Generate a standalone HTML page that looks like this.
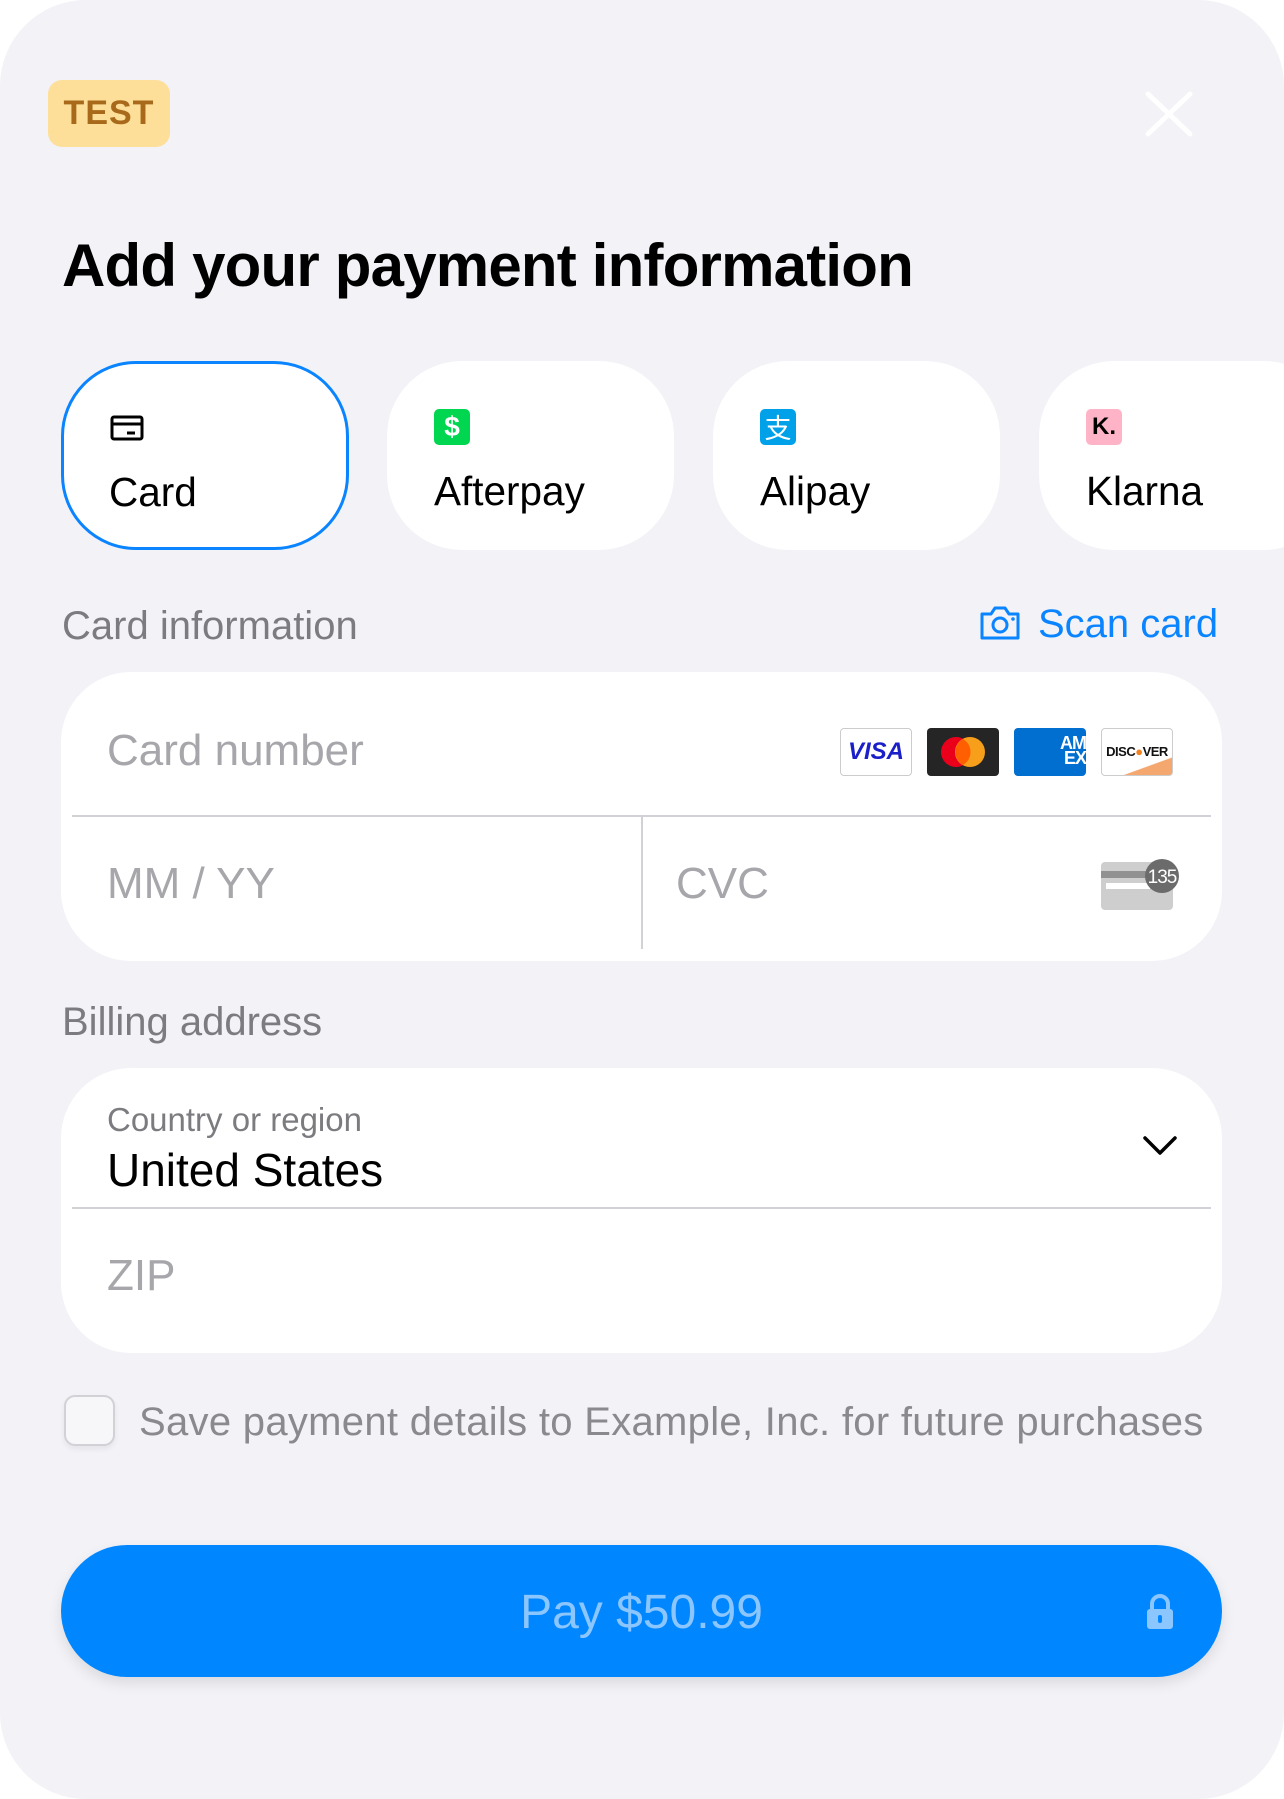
<!DOCTYPE html>
<html><head><meta charset="utf-8"><style>
*{margin:0;padding:0;box-sizing:border-box}
html,body{width:1284px;height:1799px;background:#fff;overflow:hidden;font-family:"Liberation Sans",sans-serif}
.sheet{position:absolute;left:0;top:0;width:1284px;height:1799px;background:#f2f2f7;border-radius:86px}
.a{position:absolute}
.tab{position:absolute;top:361px;height:189px;width:287px;background:#fff;border-radius:75px}
.tab .lbl{position:absolute;left:47px;top:110px;font-size:40.5px;color:#000;line-height:1}
.tab .ic{position:absolute;left:47px;top:48px;width:36px;height:36px;border-radius:5px}
.ph{position:absolute;font-size:44px;color:#a6a6ab;line-height:1}
.sec{position:absolute;font-size:40px;color:#7c7c80;line-height:1;left:62px}
</style></head><body>
<div class="sheet">
  <div class="a" style="left:48px;top:80px;width:122px;height:67px;background:#fddf99;border-radius:14px;color:#a86a1a;font-weight:bold;font-size:34px;line-height:67px;text-align:center;letter-spacing:1px">TEST</div>
  <svg class="a" style="left:1144px;top:90px" width="50" height="48"><path d="M4 4L46 44M46 4L4 44" stroke="#fff" stroke-width="5" stroke-linecap="round"/></svg>
  <div class="a" style="left:62px;top:236px;font-size:60px;font-weight:bold;color:#000;line-height:1;letter-spacing:-0.8px">Add your payment information</div>

  <div class="tab" style="left:61px;border:3px solid #0a84ff;width:288px"><svg class="ic" style="left:45px;top:46px" viewBox="0 0 36 36"><rect x="3" y="7" width="30" height="22" rx="2" fill="none" stroke="#000" stroke-width="3"/><line x1="3" y1="14" x2="33" y2="14" stroke="#000" stroke-width="3"/><line x1="18" y1="23" x2="26" y2="23" stroke="#000" stroke-width="3"/></svg><div class="lbl" style="left:45px;top:108px">Card</div></div>
  <div class="tab" style="left:387px"><div class="ic" style="background:#00d64f;color:#fff;font-weight:bold;font-size:28px;text-align:center;line-height:36px">$</div><div class="lbl">Afterpay</div></div>
  <div class="tab" style="left:713px"><div class="ic" style="background:#00a1e9;color:#fff;font-size:27px;text-align:center;line-height:36px;font-family:'Noto Sans CJK SC',sans-serif">支</div><div class="lbl">Alipay</div></div>
  <div class="tab" style="left:1039px;width:300px"><div class="ic" style="background:#ffb3c7;color:#000;font-weight:bold;font-size:24px;text-align:center;line-height:36px">K.</div><div class="lbl">Klarna</div></div>

  <div class="sec" style="top:606px">Card information</div>
  <svg class="a" style="left:978px;top:604px" width="44" height="38" viewBox="0 0 44 38"><path d="M4 10h9l4-6h10l4 6h9v24H4z" fill="none" stroke="#0a84ff" stroke-width="3" stroke-linejoin="round"/><circle cx="22" cy="21" r="7" fill="none" stroke="#0a84ff" stroke-width="3"/><circle cx="35" cy="15" r="1.8" fill="#0a84ff"/></svg>
  <div class="a" style="left:1038px;top:604px;font-size:40px;color:#0a84ff;line-height:1">Scan card</div>

  <div class="a" style="left:61px;top:672px;width:1161px;height:289px;background:#fff;border-radius:70px"></div>
  <div class="a" style="left:72px;top:815px;width:1139px;height:2px;background:#d1d1d6"></div>
  <div class="a" style="left:641px;top:816px;width:2px;height:133px;background:#d1d1d6"></div>
  <div class="ph" style="left:107px;top:729px">Card number</div>
  <div class="ph" style="left:107px;top:862px">MM / YY</div>
  <div class="ph" style="left:676px;top:862px">CVC</div>
  <div class="a" style="left:840px;top:728px;width:72px;height:48px;border:1px solid #ccc;border-radius:4px;background:#fff;color:#1a1fc8;font-weight:bold;font-style:italic;font-size:24px;text-align:center;line-height:46px">VISA</div>
  <svg class="a" style="left:927px;top:728px" width="72" height="48"><rect width="72" height="48" rx="4" fill="#252525"/><circle cx="29" cy="24" r="15" fill="#eb001b"/><circle cx="43" cy="24" r="15" fill="#f79e1b"/><path d="M36 11a15 15 0 0 1 0 26a15 15 0 0 1 0-26z" fill="#ff5f00"/></svg>
  <div class="a" style="left:1014px;top:728px;width:72px;height:48px;border-radius:4px;background:#016fd0;color:#fff;font-weight:bold;font-size:18px;line-height:15px;text-align:right;padding:8px 0 0 0;letter-spacing:-1px">AM<br>EX</div>
  <div class="a" style="left:1101px;top:728px;width:72px;height:48px;border:1px solid #ccc;border-radius:4px;background:linear-gradient(160deg,#fff 75%,#f4a870 76%);color:#111;font-weight:bold;font-size:13px;line-height:46px;text-align:center;letter-spacing:-0.5px">DISC<span style="color:#f48120">●</span>VER</div>
  <svg class="a" style="left:1100px;top:858px" width="82" height="54"><rect x="1" y="4" width="72" height="48" rx="4" fill="#cecece"/><rect x="1" y="13" width="72" height="7" fill="#919191"/><rect x="6" y="25" width="44" height="6" fill="#fff"/><circle cx="62" cy="18" r="17" fill="#6b6b6b"/><text x="62" y="25" fill="#fff" font-size="19" text-anchor="middle" font-family="Liberation Sans" letter-spacing="-1">135</text></svg>

  <div class="sec" style="top:1002px">Billing address</div>
  <div class="a" style="left:61px;top:1068px;width:1161px;height:285px;background:#fff;border-radius:70px"></div>
  <div class="a" style="left:72px;top:1207px;width:1139px;height:2px;background:#d1d1d6"></div>
  <div class="a" style="left:107px;top:1103px;font-size:33px;color:#7c7c80;line-height:1">Country or region</div>
  <div class="a" style="left:107px;top:1147px;font-size:46px;color:#000;line-height:1">United States</div>
  <svg class="a" style="left:1142px;top:1134px" width="36" height="24"><path d="M3 4l15 15L33 4" fill="none" stroke="#000" stroke-width="3.5" stroke-linecap="round" stroke-linejoin="round"/></svg>
  <div class="ph" style="left:107px;top:1254px">ZIP</div>

  <div class="a" style="left:64px;top:1395px;width:51px;height:51px;border:2px solid #d1d1d6;border-radius:11px;background:#f7f7fa;box-shadow:0 3px 6px rgba(0,0,0,0.06)"></div>
  <div class="a" style="left:139px;top:1402px;font-size:40px;color:#8a8a8e;line-height:1;letter-spacing:0.3px">Save payment details to Example, Inc. for future purchases</div>

  <div class="a" style="left:61px;top:1545px;width:1161px;height:132px;background:#0087ff;border-radius:66px;box-shadow:0 6px 14px rgba(0,0,0,0.1)"></div>
  <div class="a" style="left:61px;top:1589px;width:1161px;text-align:center;font-size:48px;color:#8cc6ff;line-height:1">Pay $50.99</div>
  <svg class="a" style="left:1144px;top:1592px" width="32" height="40"><path d="M8 18v-6a8 8 0 0 1 16 0v6" fill="none" stroke="#8cc6ff" stroke-width="4"/><rect x="3" y="17" width="26" height="20" rx="3" fill="#8cc6ff"/><rect x="14" y="23" width="4" height="8" rx="2" fill="#0087ff"/></svg>
</div>
</body></html>
